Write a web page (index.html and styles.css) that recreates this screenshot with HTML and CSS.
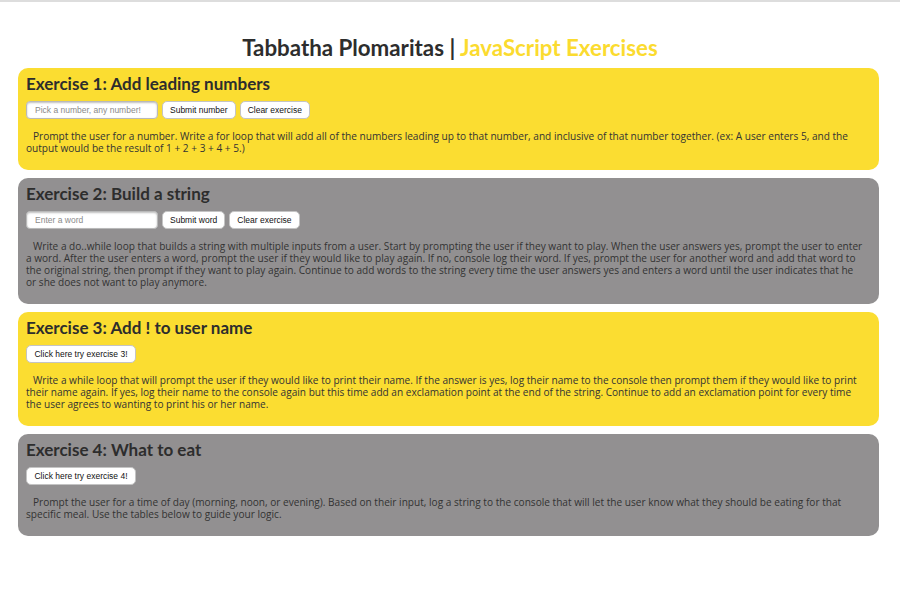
FILE: index.html
```html
<!DOCTYPE html>
<html>
<head>
<meta charset="utf-8">
<link rel="stylesheet" href="styles.css">
</head>
<body>
<div class="topline"></div>
<h1 class="title">Tabbatha Plomaritas | <span class="accent">JavaScript Exercises</span></h1>
<main class="list">
  <section class="card yellow">
    <h2>Exercise 1: Add leading numbers</h2>
    <div class="controls">
      <input class="field" type="text" placeholder="Pick a number, any number!">
      <button class="btn">Submit number</button>
      <button class="btn">Clear exercise</button>
    </div>
    <p>Prompt the user for a number. Write a for loop that will add all of the numbers leading up to that number, and inclusive of that number together. (ex: A user enters 5, and the output would be the result of 1 + 2 + 3 + 4 + 5.)</p>
  </section>
  <section class="card gray">
    <h2>Exercise 2: Build a string</h2>
    <div class="controls">
      <input class="field" type="text" placeholder="Enter a word">
      <button class="btn">Submit word</button>
      <button class="btn">Clear exercise</button>
    </div>
    <p>Write a do..while loop that builds a string with multiple inputs from a user. Start by prompting the user if they want to play. When the user answers yes, prompt the user to enter a word. After the user enters a word, prompt the user if they would like to play again. If no, console log their word. If yes, prompt the user for another word and add that word to the original string, then prompt if they want to play again. Continue to add words to the string every time the user answers yes and enters a word until the user indicates that he or she does not want to play anymore.</p>
  </section>
  <section class="card yellow">
    <h2>Exercise 3: Add ! to user name</h2>
    <div class="controls">
      <button class="btn wide">Click here try exercise 3!</button>
    </div>
    <p>Write a while loop that will prompt the user if they would like to print their name. If the answer is yes, log their name to the console then prompt them if they would like to print their name again. If yes, log their name to the console again but this time add an exclamation point at the end of the string. Continue to add an exclamation point for every time the user agrees to wanting to print his or her name.</p>
  </section>
  <section class="card gray">
    <h2>Exercise 4: What to eat</h2>
    <div class="controls">
      <button class="btn wide">Click here try exercise 4!</button>
    </div>
    <p>Prompt the user for a time of day (morning, noon, or evening). Based on their input, log a string to the console that will let the user know what they should be eating for that specific meal. Use the tables below to guide your logic.</p>
  </section>
</main>
</body>
</html>
```

FILE: styles.css
```css
html, body {
  margin: 0;
  padding: 0;
  background: #ffffff;
}
body {
  font-family: "Open Sans", "Liberation Sans", sans-serif;
  color: #2f2f2f;
}
.topline {
  height: 2px;
  background: #dddddd;
}
.title {
  margin: 33px 0 7px;
  text-align: center;
  font-family: Lato, "Open Sans", sans-serif;
  font-weight: 700;
  font-size: 22.3px;
  line-height: 26px;
  color: #2d2d2d;
}
.accent {
  color: #fbdb2f;
}
.list {
  display: flex;
  flex-direction: column;
  gap: 8px;
  margin: 0 21px 0 18px;
}
.card {
  border-radius: 10px;
  padding: 5px 8px 16px;
}
.yellow { background: #fbdd31; }
.gray { background: #929091; }
.card h2 {
  margin: 0;
  font-family: Lato, "Open Sans", sans-serif;
  font-size: 17px;
  line-height: 22px;
  font-weight: 700;
  color: #2d2d2d;
}
.controls {
  display: flex;
  gap: 4px;
  margin-top: 6px;
}
.field {
  box-sizing: border-box;
  width: 132px;
  height: 18px;
  padding: 0 8px;
  border: 1px solid #b9b9b9;
  border-radius: 4px;
  background: #fff;
  font-family: "Liberation Sans", Arial, sans-serif;
  font-size: 8.5px;
  color: #333;
  box-shadow: inset 0 1px 2px rgba(0,0,0,0.25);
}
.field::placeholder {
  color: #8a8a8a;
}
.btn {
  box-sizing: border-box;
  height: 18px;
  padding: 0 7px;
  border: 1px solid #c4c4c4;
  border-radius: 5px;
  background: #fff;
  font-family: "Liberation Sans", Arial, sans-serif;
  font-size: 8.5px;
  color: #111;
  white-space: nowrap;
}
.btn.wide {
  width: 110px;
}
.card p {
  margin: 11px 6px 0 0;
  font-size: 10.1px;
  line-height: 12px;
  text-indent: 7px;
  color: #333333;
}
```
